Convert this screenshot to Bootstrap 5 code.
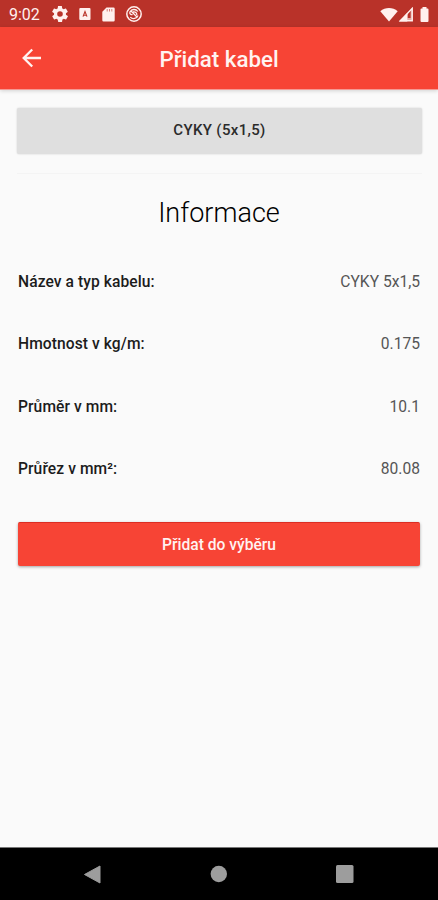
<!DOCTYPE html>
<html lang="cs">
<head>
<meta charset="utf-8">
<meta name="viewport" content="width=device-width, initial-scale=1">
<title>Přidat kabel</title>
<link href="https://cdn.jsdelivr.net/npm/bootstrap@5.3.0/dist/css/bootstrap.min.css" rel="stylesheet">
<style>
  body { font-family: Roboto, "Liberation Sans", sans-serif; background: #fafafa; color: #1c1c1c; height: 900px; overflow: hidden; }
  svg { display: block; flex: none; }
  .status-strip { height: 27px; background: #b93229; color: #fff0ee; padding: 1px 8px 0 9px; }
  .clock { font-size: 16px; line-height: 26px; width: 43px; padding-top: 1px; }
  .notices { gap: 11px; }
  .app-bar { height: 63px; background: #f74435; border-bottom: 1px solid #f59a94; box-shadow: 0 1px 4px rgba(0,0,0,.16); padding: 0 18px; color: #fff3f1; }
  .app-title { font-size: 22.3px; font-weight: 500; line-height: 30px; padding-top: 2px; }
  .side-slot { width: 28px; }
  .screen-body { padding: 18px 16px 0 17px; }
  .cable-btn { height: 46px; font-size: 15px; font-weight: 500; letter-spacing: .35px; background: #dfdfdf; border: 0; color: #2b2b2b; box-shadow: 0 0 2px rgba(0,0,0,.18); border-radius: 2px; padding: 0 0 2px; }
  .thin-rule { height: 1px; background: #f4f4f4; margin-top: 19px; }
  .section-title { font-size: 27px; font-weight: 300; line-height: 32px; margin: 23px 1px 0 0; letter-spacing: .02px; color: #000; }
  .info-list { margin-top: 22px; padding: 0 2px 0 1px; }
  .info-row { height: 62.6px; font-size: 15.6px; }
  .info-row dt { font-weight: 500; letter-spacing: .08px; }
  .info-row dd { font-weight: 400; color: #555; }
  .add-btn { height: 44px; font-size: 15.6px; font-weight: 500; background: #f74435; color: #fff3f1; border: 0; border-top: 1px solid #dc2c22; border-radius: 2px; box-shadow: 0 1px 3px rgba(0,0,0,.35); margin: 21px 2px 0 1px; padding: 2px 0 0; }
  .nav-strip { height: 53px; background: #000; border-top: 1px solid #777; padding: 0 84px 0 83px; }
</style>
</head>
<body class="d-flex flex-column">
<div class="status-strip d-flex align-items-center">
  <span class="clock">9:02</span>
  <div class="notices d-flex align-items-center">
    <svg width="16" height="16" viewBox="2 2 20 20" fill="currentColor"><path d="M19.4 13c.1-.6.1-1.300 0-2l2.100-1.600c.2-.2.2-.4.1-.6l-2-3.500c-.1-.2-.4-.3-.6-.2l-2.500 1c-.5-.4-1.100-.7-1.700-1l-.4-2.600c0-.3-.2-.5-.4-.5h-4c-.3 0-.5.2-.5.4l-.4 2.700c-.6.2-1.200.6-1.700 1l-2.500-1c-.2-.1-.5 0-.6.2l-2 3.500c-.1.2-.1.500.1.600L4.600 11c-.1.7-.1 1.300 0 2l-2.100 1.600c-.2.200-.2.400-.1.600l2 3.500c.1.200.4.300.6.200l2.500-1c.5.400 1.100.700 1.700 1l.4 2.600c0 .300.2.500.5.500h4c.3 0 .5-.2.500-.4l.4-2.700c.6-.2 1.200-.6 1.700-1l2.500 1c.2.100.5 0 .6-.2l2-3.500c.1-.2.100-.5-.1-.6zM12 15.500a3.500 3.500 0 1 1 0-7 3.500 3.500 0 0 1 0 7z"/></svg>
    <svg width="12" height="12" viewBox="0 0 12 12"><rect x=".3" width="11.200" height="12" rx="1" fill="currentColor"/><path d="M4 8.600 6 3.500 8 8.600M4.500 7.200h3" fill="none" stroke="#b93229" stroke-width="1.100"/></svg>
    <svg width="13" height="15" viewBox="0 0 13 15"><path d="M4.500.5h7a1.200 1.200 0 0 1 1.200 1.200v11.600a1.200 1.200 0 0 1-1.200 1.200h-10A1.200 1.200 0 0 1 .3 13.300V4.700z" fill="currentColor"/><path d="M5.200 2v2.500M7.500 2v2.500M9.800 2v2.500" stroke="#b93229" stroke-width=".6"/></svg>
    <svg width="16" height="18" viewBox="1.500 0 16 18" fill="none" stroke="currentColor"><circle cx="9.500" cy="9" r="7.200" stroke-width="1.500"/><path d="M13.300 6.500A4.600 4.600 0 0 0 5.500 6.800c-.8 2 .7 2.800 2.600 2.900M5.800 12.100A4.600 4.600 0 0 0 13.500 10.500M6 5.500l7 7M8.500 7c2.300-.5 4 .7 3.800 3" stroke-width="1.300"/></svg>
  </div>
  <div class="d-flex align-items-center ms-auto">
    <svg width="18" height="15" viewBox="0 0 18 15"><path d="M.3 4.200C5.300-.2 12.700-.2 17.700 4.200L9 14.500z" fill="currentColor"/></svg>
    <svg width="16" height="15" viewBox="0 0 16 15"><path d="M15 .5V14.500H.8z" fill="#e5aaa5"/><path d="M9.300 6.100V14.500H.8z" fill="currentColor"/><path d="M9.800 6.500 12.600 3.800V11H9.800z" fill="#b93229"/><path d="M14.200 1.300V13.700H2.600z" fill="none" stroke="currentColor" stroke-width="1.300"/></svg>
    <svg class="ms-1" width="12" height="15" viewBox="0 0 12 15"><path d="M4.500 0h4v1.500h1a1 1 0 0 1 1 1V14a1 1 0 0 1-1 1h-6a1 1 0 0 1-1-1V2.500a1 1 0 0 1 1-1h1z" fill="currentColor"/></svg>
  </div>
</div>
<header class="app-bar d-flex align-items-center justify-content-between">
  <div class="side-slot"><svg width="28" height="28" viewBox="0 0 28 28" fill="none" stroke="currentColor" stroke-width="2.300"><path d="M23 14H6.500M14.200 5.500 5.700 14l8.500 8.500"/></svg></div>
  <h1 class="app-title mb-0">Přidat kabel</h1>
  <div class="side-slot"></div>
</header>
<main class="screen-body flex-grow-1">
  <button class="btn cable-btn w-100" type="button">CYKY (5x1,5)</button>
  <div class="thin-rule"></div>
  <h2 class="section-title text-center">Informace</h2>
  <dl class="info-list mb-0">
    <div class="info-row d-flex align-items-center justify-content-between"><dt>Název a typ kabelu:</dt><dd class="mb-0">CYKY 5x1,5</dd></div>
    <div class="info-row d-flex align-items-center justify-content-between"><dt>Hmotnost v kg/m:</dt><dd class="mb-0">0.175</dd></div>
    <div class="info-row d-flex align-items-center justify-content-between"><dt>Průměr v mm:</dt><dd class="mb-0">10.1</dd></div>
    <div class="info-row d-flex align-items-center justify-content-between"><dt>Průřez v mm²:</dt><dd class="mb-0">80.08</dd></div>
  </dl>
  <div class="d-grid"><button class="btn add-btn" type="button">Přidat do výběru</button></div>
</main>
<nav class="nav-strip d-flex align-items-center justify-content-between">
  <svg width="18" height="19" viewBox="0 0 18 19"><path d="M1.500 9.500 17 1v17z" fill="#9d9d9d" stroke="#9d9d9d" stroke-linejoin="round"/></svg>
  <svg width="17" height="18" viewBox="0 0 17 18"><circle cx="8.800" cy="9" r="8.200" fill="#9d9d9d"/></svg>
  <svg width="18" height="18" viewBox="0 0 18 18"><rect width="17.500" height="18" rx="1.500" fill="#9d9d9d"/></svg>
</nav>
<script src="https://cdn.jsdelivr.net/npm/bootstrap@5.3.0/dist/js/bootstrap.bundle.min.js"></script>
</body>
</html>
